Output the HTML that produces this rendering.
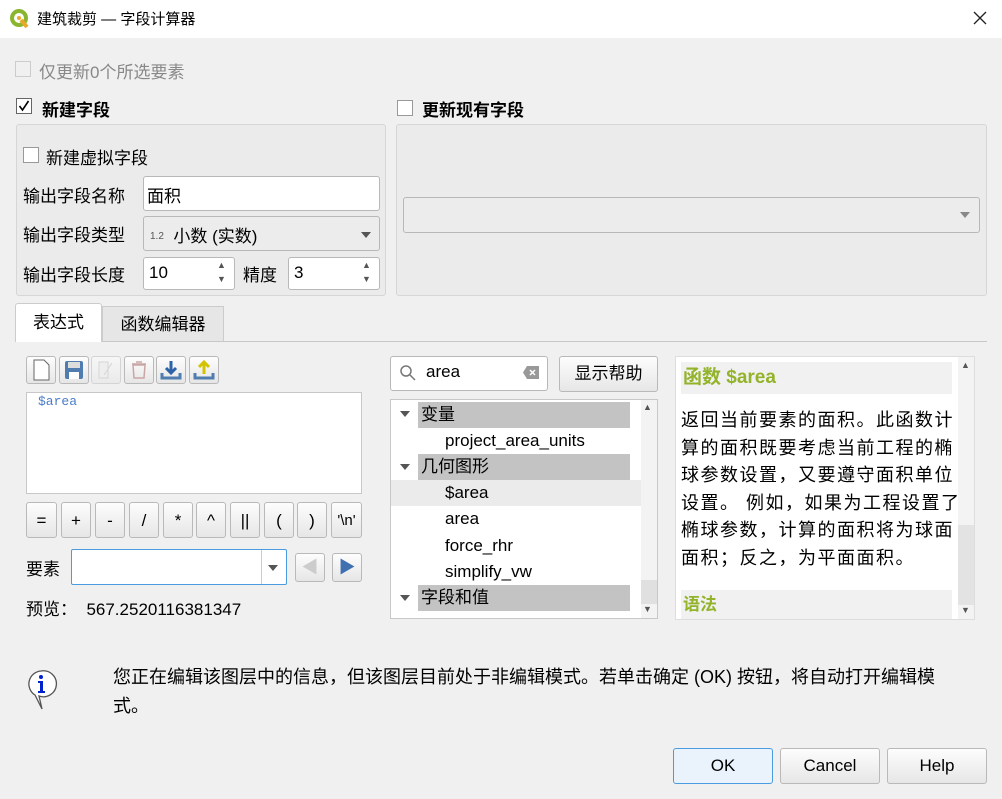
<!DOCTYPE html>
<html><head><meta charset="utf-8"><style>
*{box-sizing:border-box;margin:0;padding:0}
body{width:1002px;height:799px;background:#f0f0f0;font-family:"Liberation Sans","Noto Sans CJK SC",sans-serif;font-size:17px;color:#000;position:relative;overflow:hidden}
.a{position:absolute}
.cb{position:absolute;width:16px;height:16px;border:1px solid #999;background:#fff}
.in{position:absolute;background:#fff;border:1px solid #b8b8b8;border-radius:3px}
.btn{position:absolute;background:linear-gradient(#fdfdfd,#e6e6e6);border:1px solid #b9b9b9;border-radius:3px;text-align:center}
.grp{position:absolute;border:1px solid #d6d6d6;border-radius:3px;background:#ebebeb}
.hdr{position:absolute;left:27px;width:212px;height:26px;background:#c3c3c3;padding-left:3px;line-height:26px}
.tri{position:absolute;left:9px;width:0;height:0;border-left:5px solid transparent;border-right:5px solid transparent;border-top:6px solid #555}
</style></head><body>
<div class="a" style="left:0;top:0;width:1002px;height:38px;background:#fff"></div>
<svg class="a" style="left:10px;top:9px" width="20" height="20" viewBox="0 0 20 20"><circle cx="9" cy="9" r="7" fill="none" stroke="#8ab52f" stroke-width="4"/><path d="M11 11 L17 18" stroke="#e9a92a" stroke-width="4"/><circle cx="9" cy="9" r="2" fill="#e9a92a"/></svg>
<div class="a" style="left:37px;top:8px;font-size:15px">建筑裁剪 — 字段计算器</div>
<svg class="a" style="left:973px;top:11px" width="14" height="14" viewBox="0 0 14 14"><path d="M1 1l12 12M13 1L1 13" stroke="#222" stroke-width="1.3"/></svg>

<div class="cb" style="left:15px;top:61px;border-color:#ccc;background:#f0f0f0"></div>
<div class="a" style="left:39px;top:58px;color:#888">仅更新0个所选要素</div>

<div class="cb" style="left:16px;top:98px;border-color:#666"></div>
<svg class="a" style="left:18px;top:100px" width="12" height="12" viewBox="0 0 12 12"><path d="M1.5 6l3 4L10.5 1" stroke="#000" stroke-width="1.6" fill="none"/></svg>
<div class="a" style="left:42px;top:96px;font-weight:bold">新建字段</div>
<div class="grp" style="left:16px;top:124px;width:370px;height:172px"></div>
<div class="cb" style="left:23px;top:147px"></div>
<div class="a" style="left:46px;top:144px">新建虚拟字段</div>
<div class="a" style="left:23px;top:182px">输出字段名称</div>
<div class="in" style="left:143px;top:176px;width:237px;height:35px;padding:5px 3px">面积</div>
<div class="a" style="left:23px;top:221px">输出字段类型</div>
<div class="in" style="left:143px;top:216px;width:237px;height:35px;background:#ececec;padding:5px 6px"><span style="font-size:10px;color:#555;vertical-align:3px">1.2</span>&nbsp;&nbsp;小数 (实数)</div>
<div class="tri" style="left:361px;top:232px"></div>
<div class="a" style="left:23px;top:261px">输出字段长度</div>
<div class="in" style="left:143px;top:257px;width:92px;height:33px;padding:5px 5px">10</div>
<div class="a" style="left:217px;top:258px;font-size:9px;color:#555;line-height:14px">▲<br>▼</div>
<div class="a" style="left:243px;top:261px">精度</div>
<div class="in" style="left:288px;top:257px;width:92px;height:33px;padding:5px 5px">3</div>
<div class="a" style="left:362px;top:258px;font-size:9px;color:#555;line-height:14px">▲<br>▼</div>

<div class="cb" style="left:397px;top:100px"></div>
<div class="a" style="left:422px;top:96px;font-weight:bold">更新现有字段</div>
<div class="grp" style="left:396px;top:124px;width:591px;height:172px"></div>
<div class="in" style="left:403px;top:197px;width:577px;height:36px;background:#ececec"></div>
<div class="tri" style="left:960px;top:212px;border-top-color:#888"></div>

<div class="a" style="left:15px;top:341px;width:972px;height:1px;background:#c8c8c8"></div>
<div class="a" style="left:15px;top:303px;width:87px;height:39px;background:#fff;border:1px solid #ccc;border-bottom:none;border-radius:3px 3px 0 0;text-align:center;line-height:38px">表达式</div>
<div class="a" style="left:102px;top:306px;width:122px;height:35px;background:#e6e6e6;border:1px solid #ccc;border-bottom:none;text-align:center;line-height:36px">函数编辑器</div>

<div class="btn" style="left:26px;top:356px;width:30px;height:28px"><svg width="20" height="22" viewBox="0 0 20 22" style="margin-top:2px"><path d="M3 1h10l5 5v15H3z" fill="#fff" stroke="#666"/></svg></div>
<div class="btn" style="left:59px;top:356px;width:30px;height:28px"><svg width="20" height="20" viewBox="0 0 20 20" style="margin-top:3px"><rect x="1" y="1" width="18" height="18" rx="2" fill="#4f7db0"/><rect x="4" y="2" width="12" height="6" fill="#ddd"/><rect x="5" y="12" width="10" height="7" fill="#fff"/></svg></div>
<div class="btn" style="left:91px;top:356px;width:30px;height:28px;opacity:.5"><svg width="18" height="20" viewBox="0 0 18 20" style="margin-top:3px"><path d="M2 2h9v16H2z M7 15 L15 3" fill="#eee" stroke="#bbb"/></svg></div>
<div class="btn" style="left:124px;top:356px;width:30px;height:28px"><svg width="18" height="20" viewBox="0 0 18 20" style="margin-top:3px"><path d="M3 5h12l-1 13H4z M2 4h14 M6 2h6" fill="none" stroke="#c9a6a6" stroke-width="1.5"/></svg></div>
<div class="btn" style="left:156px;top:356px;width:30px;height:28px"><svg width="22" height="22" viewBox="0 0 22 22" style="margin-top:2px"><path d="M11 2v11 M6 9l5 5 5-5" stroke="#2c62a6" stroke-width="3" fill="none"/><path d="M2 14v5h18v-5" stroke="#4f7db0" stroke-width="3" fill="none"/></svg></div>
<div class="btn" style="left:189px;top:356px;width:30px;height:28px"><svg width="22" height="22" viewBox="0 0 22 22" style="margin-top:2px"><path d="M11 15V4 M6 8l5-5 5 5" stroke="#d4c400" stroke-width="3" fill="none"/><path d="M2 14v5h18v-5" stroke="#4f7db0" stroke-width="3" fill="none"/></svg></div>

<div class="a" style="left:26px;top:392px;width:336px;height:102px;background:#fff;border:1px solid #c8c8c8;font-family:'Liberation Mono',monospace;font-size:13px;color:#4a7cc9;padding:1px 11px">$area</div>
<div class="a" style="left:26px;top:502px;width:337px">
<div class="btn" style="left:0;top:0;width:31px;height:36px;line-height:36px">=</div>
<div class="btn" style="left:35px;top:0;width:30px;height:36px;line-height:36px">+</div>
<div class="btn" style="left:69px;top:0;width:30px;height:36px;line-height:36px">-</div>
<div class="btn" style="left:103px;top:0;width:30px;height:36px;line-height:36px">/</div>
<div class="btn" style="left:137px;top:0;width:30px;height:36px;line-height:36px">*</div>
<div class="btn" style="left:170px;top:0;width:30px;height:36px;line-height:36px">^</div>
<div class="btn" style="left:204px;top:0;width:30px;height:36px;line-height:36px">||</div>
<div class="btn" style="left:238px;top:0;width:30px;height:36px;line-height:36px">(</div>
<div class="btn" style="left:271px;top:0;width:30px;height:36px;line-height:36px">)</div>
<div class="btn" style="left:305px;top:0;width:31px;height:36px;line-height:36px;font-size:15px">'\n'</div>
</div>
<div class="a" style="left:26px;top:555px">要素</div>
<div class="a" style="left:71px;top:549px;width:216px;height:36px;background:#fff;border:1px solid #4a9be0;border-radius:2px"></div>
<div class="a" style="left:261px;top:550px;width:1px;height:34px;background:#ccc"></div>
<div class="tri" style="left:268px;top:565px"></div>
<div class="btn" style="left:295px;top:553px;width:30px;height:29px;color:#ccc;line-height:27px">◀</div>
<div class="btn" style="left:332px;top:553px;width:30px;height:29px;color:#3f70b0;line-height:27px">▶</div>
<div class="a" style="left:26px;top:595px">预览：&nbsp;&nbsp;567.2520116381347</div>

<div class="in" style="left:390px;top:356px;width:158px;height:35px;padding:5px 0 0 35px">area</div>
<svg class="a" style="left:399px;top:364px" width="18" height="18" viewBox="0 0 18 18"><circle cx="7" cy="7" r="5" fill="none" stroke="#777" stroke-width="1.5"/><path d="M11 11l5 5" stroke="#777" stroke-width="1.5"/></svg>
<svg class="a" style="left:523px;top:366px" width="16" height="13" viewBox="0 0 16 13"><path d="M4 0h12v13H4L0 6.5z" fill="#999"/><path d="M7 4l5 5M12 4l-5 5" stroke="#fff" stroke-width="1.5"/></svg>
<div class="btn" style="left:559px;top:356px;width:99px;height:36px;line-height:34px">显示帮助</div>

<div class="a" style="left:390px;top:399px;width:268px;height:220px;background:#fff;border:1px solid #c8c8c8;overflow:hidden">
<div class="tri" style="top:11px"></div><div class="hdr" style="top:2px">变量</div>
<div class="a" style="left:54px;top:28px;height:26px;line-height:26px">project_area_units</div>
<div class="tri" style="top:64px"></div><div class="hdr" style="top:54px">几何图形</div>
<div class="a" style="left:0;top:80px;width:250px;height:26px;background:#ebebeb"></div>
<div class="a" style="left:54px;top:80px;line-height:26px">$area</div>
<div class="a" style="left:54px;top:106px;line-height:26px">area</div>
<div class="a" style="left:54px;top:133px;line-height:26px">force_rhr</div>
<div class="a" style="left:54px;top:159px;line-height:26px">simplify_vw</div>
<div class="tri" style="top:195px"></div><div class="hdr" style="top:185px">字段和值</div>
<div class="a" style="left:250px;top:0;width:17px;height:220px;background:#f3f3f3"></div>
<div class="a" style="left:252px;top:2px;font-size:9px;color:#555">▲</div>
<div class="a" style="left:250px;top:180px;width:17px;height:24px;background:#e0e0e0"></div>
<div class="a" style="left:252px;top:204px;font-size:9px;color:#555">▼</div>
</div>

<div class="a" style="left:675px;top:356px;width:300px;height:264px;background:#fff;border:1px solid #ddd;overflow:hidden">
<div class="a" style="left:5px;top:5px;width:271px;height:32px;background:#f1f1f1;color:#93b32a;font-weight:bold;font-size:19px;line-height:32px;padding-left:2px">函数 $area</div>
<div class="a" style="left:5px;top:50px;width:280px;line-height:27.6px;font-size:18px;letter-spacing:1.5px">返回当前要素的面积。此函数计算的面积既要考虑当前工程的椭球参数设置，又要遵守面积单位设置。 例如，如果为工程设置了椭球参数，计算的面积将为球面面积；反之，为平面面积。</div>
<div class="a" style="left:5px;top:233px;width:271px;height:32px;background:#f1f1f1;color:#93b32a;font-weight:bold;line-height:30px;padding-left:2px">语法</div>
<div class="a" style="left:282px;top:0;width:18px;height:264px;background:#f3f3f3"></div>
<div class="a" style="left:282px;top:168px;width:18px;height:80px;background:#e3e3e3"></div>
<div class="a" style="left:285px;top:3px;font-size:9px;color:#555">▲</div>
<div class="a" style="left:285px;top:248px;font-size:9px;color:#555">▼</div>
</div>

<svg class="a" style="left:27px;top:670px" width="40" height="42" viewBox="0 0 40 42"><path d="M14 1a13 13 0 1 1 -2 25l3 13-7-14A13 13 0 0 1 14 1z" fill="#fff" stroke="#555" stroke-width="1.3"/><circle cx="14" cy="7" r="2" fill="#0022cc"/><path d="M11 11h5v10h2v2h-7v-2h2v-8h-2z" fill="#0022cc"/></svg>
<div class="a" style="left:113px;top:663px;width:850px;line-height:29px;font-size:18px">您正在编辑该图层中的信息，但该图层目前处于非编辑模式。若单击确定 (OK) 按钮，将自动打开编辑模式。</div>

<div class="btn" style="left:673px;top:748px;width:100px;height:36px;line-height:34px;border-color:#4a9be0;background:#eaf2fb">OK</div>
<div class="btn" style="left:780px;top:748px;width:100px;height:36px;line-height:34px">Cancel</div>
<div class="btn" style="left:887px;top:748px;width:100px;height:36px;line-height:34px">Help</div>
</body></html>
